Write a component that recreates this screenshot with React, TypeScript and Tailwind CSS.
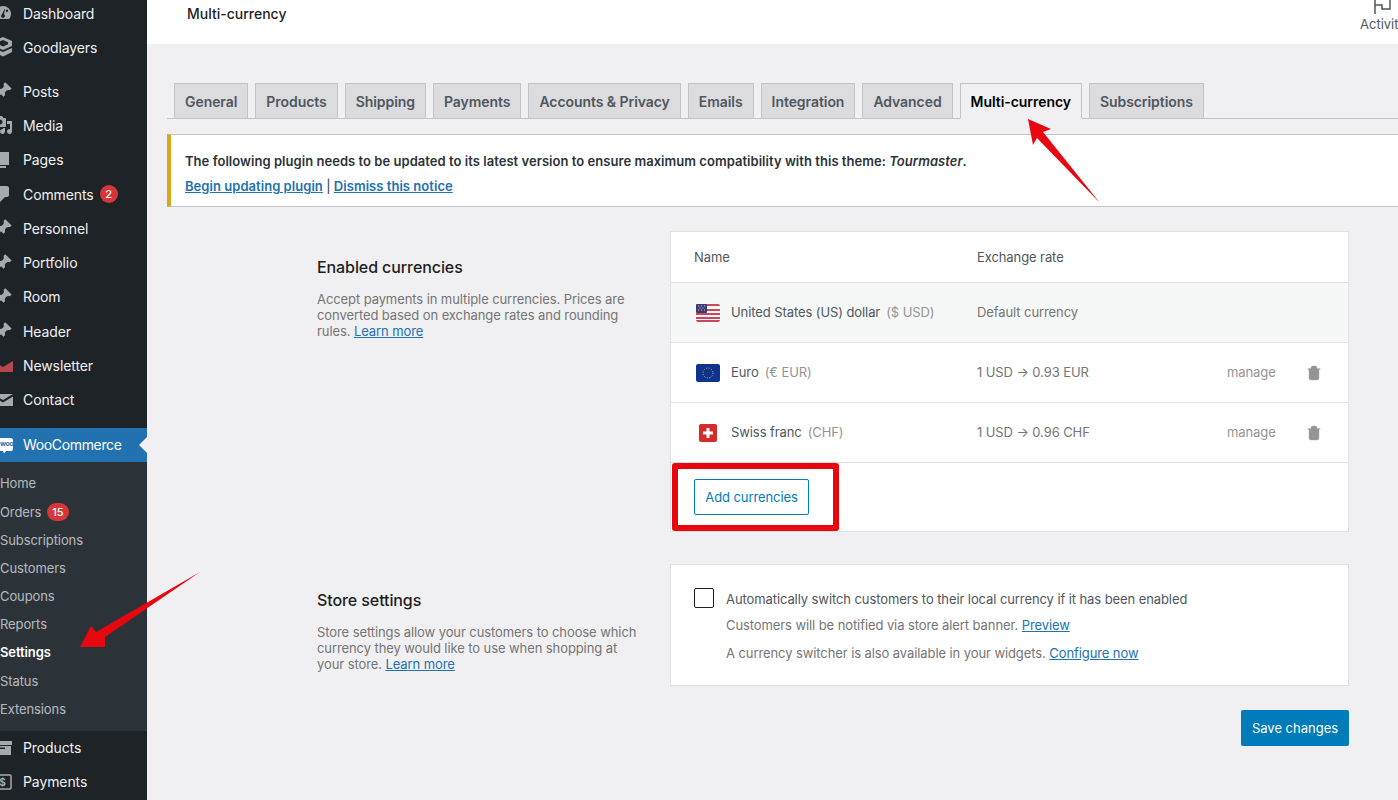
import React from 'react';
import { Trash2 } from 'lucide-react';

const PIN = 'M10.44 3.02l1.82-1.82 6.36 6.35-1.83 1.82c-1.05-.68-2.48-.57-3.41.36l-.75.75c-.92.93-1.04 2.35-.35 3.41l-1.83 1.82-2.41-2.41-2.8 2.79c-.42.42-3.38 2.71-3.8 2.29s1.86-3.39 2.28-3.81l2.79-2.79L4.1 9.36l1.83-1.82c1.05.69 2.48.57 3.41-.36l.75-.75c.93-.92 1.04-2.35.35-3.41z';
const MEDIA = 'M13 11V4c0-.55-.45-1-1-1h-1.67L9 1H5L3.67 3H2c-.55 0-1 .45-1 1v7c0 .55.45 1 1 1h10c.55 0 1-.45 1-1zM7 4.5c1.38 0 2.5 1.12 2.5 2.5S8.38 9.5 7 9.5 4.5 8.38 4.5 7 5.62 4.5 7 4.5zM14 6h5v10.5c0 1.38-1.12 2.5-2.5 2.5S14 17.88 14 16.5s1.12-2.5 2.5-2.5c.17 0 .34.02.5.05V9h-3V6zm-4 8.05V13h2v3.5c0 1.38-1.12 2.5-2.5 2.5S7 17.88 7 16.5 8.12 14 9.5 14c.17 0 .34.02.5.05z';
const PAGES = 'M6 15V2h10v13H6zm-1 1h8v2H3V5h2v11z';
const COMMENTS = 'M5 2h9c1.1 0 2 .9 2 2v7c0 1.1-.9 2-2 2h-2l-5 5v-5H5c-1.1 0-2-.9-2-2V4c0-1.1.9-2 2-2z';
const GAUGE = 'M10 3a8 8 0 0 0-8 8c0 2 .7 3.700 1.900 5h12.200A8 8 0 0 0 18 11a8 8 0 0 0-8-8zM6 6.500a1.200 1.200 0 1 1 0 2.400 1.200 1.200 0 0 1 0-2.400zm8 0a1.200 1.200 0 1 1 0 2.400 1.200 1.200 0 0 1 0-2.400zM10 15a2 2 0 0 1-1-3.700L11.500 6l.5.2-1 5.100A2 2 0 0 1 10 15z';
const STACK = 'M10 0l9 4v5l-9 4-9-4V4l9-4zm0 3L5 5.200v2L10 9.500l5-2.300v-2L10 3zM1 11l9 4 9-4v4l-9 4.500L1 15v-4z';
const MAIL_OPEN = 'M0 5l10 6 10-6v11H0V5z';
const MAIL = 'M0 4h20L10 10 0 4zm0 2.500l10 6 10-6V16H0V6.500z';
const BOX = 'M0 3h19v4H0V3zm1 5h17v9H1V8zm5 1.500V11h6V9.500H6z';

const topItems = [
  { label: 'Dashboard', d: GAUGE, cls: 'h-[34px]' },
  { label: 'Goodlayers', d: STACK, cls: 'h-[34px] mb-[10px]' },
  { label: 'Posts', d: PIN, cls: 'h-[34.300px]' },
  { label: 'Media', d: MEDIA, cls: 'h-[34.300px]' },
  { label: 'Pages', d: PAGES, cls: 'h-[34.300px]' },
  { label: 'Comments', d: COMMENTS, cls: 'h-[34.300px]', badge: '2' },
  { label: 'Personnel', d: PIN, cls: 'h-[34.300px]' },
  { label: 'Portfolio', d: PIN, cls: 'h-[34.300px]' },
  { label: 'Room', d: PIN, cls: 'h-[34.300px]' },
  { label: 'Header', d: PIN, cls: 'h-[34.300px]' },
  { label: 'Newsletter', d: MAIL_OPEN, cls: 'h-[34.300px]', red: true },
  { label: 'Contact', d: MAIL, cls: 'h-[34.300px]' },
];

const subItems = [
  { label: 'Home' },
  { label: 'Orders', badge: '15' },
  { label: 'Subscriptions' },
  { label: 'Customers' },
  { label: 'Coupons' },
  { label: 'Reports' },
  { label: 'Settings', active: true },
  { label: 'Status' },
  { label: 'Extensions' },
];

const tabs = ['General', 'Products', 'Shipping', 'Payments', 'Accounts & Privacy', 'Emails', 'Integration', 'Advanced', 'Multi-currency', 'Subscriptions'];

const MenuIcon: React.FC<{ d: string; red?: boolean }> = ({ d, red }) => (
  <svg viewBox="0 0 20 20" className={`w-5 h-5 -ml-[7px] mr-[10px] shrink-0 ${red ? 'fill-[#b5474f]' : 'fill-[#a7aaad]'}`}>
    <path d={d} />
  </svg>
);

const Badge: React.FC<{ n: string }> = ({ n }) => (
  <span className="ml-[6px] h-[18px] min-w-[18px] px-[5px] rounded-full bg-[#d63638] text-white text-[11px] font-medium flex items-center justify-center">{n}</span>
);

const Sidebar: React.FC = () => (
  <div className="w-[147px] shrink-0 bg-[#1d2327] text-[#f0f0f1] text-[14px] tracking-[-0.1px] overflow-hidden">
    <div className="-mt-[4px]">
      {topItems.map(it => (
        <div key={it.label} className={`flex items-center ${it.cls}`}>
          <MenuIcon d={it.d} red={it.red} />
          <span>{it.label}</span>
          {it.badge && <Badge n={it.badge} />}
        </div>
      ))}
    </div>
    <div className="mt-[11px] h-[34px] bg-[#2271b1] text-white flex items-center relative tracking-[-0.35px]">
      <svg viewBox="0 0 20 20" className="w-5 h-5 -ml-[7px] mr-[10px] shrink-0 fill-white">
        <path d="M2 3h16c1 0 2 1 2 2v9c0 1-1 2-2 2h-5l-2 2.500L10 16H2c-1 0-2-1-2-2V5c0-1 1-2 2-2z" />
      </svg>
      <span className="absolute left-[0px] top-[11px] text-[7px] font-bold text-[#2271b1] leading-[10px]">woo</span>
      <span>WooCommerce</span>
      <span className="absolute right-0 top-[9px] w-0 h-0 border-y-[8px] border-y-transparent border-r-[8px] border-r-[#f0f0f2]" />
    </div>
    <div className="h-[269px] bg-[#2c3338] pt-[8px] text-[13px] text-[#f0f6fc]/70">
      {subItems.map(it => (
        <div key={it.label} className={`flex items-center h-[28.200px] ${it.active ? 'text-white font-semibold' : ''}`}>
          <span>{it.label}</span>
          {it.badge && <Badge n={it.badge} />}
        </div>
      ))}
    </div>
    <div>
      <div className="flex items-center h-[34px]">
        <MenuIcon d={BOX} />
        <span>Products</span>
      </div>
      <div className="flex items-center h-[34px]">
        <svg viewBox="0 0 20 20" className="w-5 h-5 -ml-[7px] mr-[10px] shrink-0">
          <rect x="1" y="3" width="17" height="14" rx="1" fill="none" stroke="#a7aaad" strokeWidth="1.500" />
          <text x="9.500" y="14" textAnchor="middle" fontSize="10" fontWeight="700" fill="#a7aaad">$</text>
        </svg>
        <span>Payments</span>
      </div>
    </div>
  </div>
);

const UsFlag = () => (
  <svg viewBox="0 0 24 18" className="w-6 h-[18px]">
    <rect width="24" height="18" rx="2" fill="#f4f4f4" />
    <path d="M0 2a2 2 0 0 1 2-2h20a2 2 0 0 1 2 2H0zM0 5h24v2H0zM0 9h24v2H0zM0 13h24v2H0zM0 16h24a2 2 0 0 1-2 2H2a2 2 0 0 1-2-2z" fill="#c9485b" />
    <rect width="11" height="9" rx="1" fill="#3c3b6e" />
    <path d="M2 2h1M5 2h1M8 2h1M3.500 4h1M6.500 4h1M2 6h1M5 6h1M8 6h1" stroke="#c8c8e0" strokeWidth="1" />
  </svg>
);

const EuFlag = () => (
  <svg viewBox="0 0 24 18" className="w-6 h-[18px]">
    <rect width="24" height="18" rx="2" fill="#10338f" />
    <circle cx="12" cy="9" r="5" fill="none" stroke="#d8c94a" strokeWidth="1" strokeDasharray="1 1.620" />
  </svg>
);

const ChFlag = () => (
  <svg viewBox="0 0 18 18" className="w-[18px] h-[18px] mx-[3px]">
    <rect width="18" height="18" rx="2" fill="#d52b2b" />
    <path d="M7.500 4h3v3.500H14v3h-3.500V14h-3v-3.500H4v-3h3.500z" fill="#fff" />
  </svg>
);

const CurrencyRow: React.FC<{ flag: React.ReactNode; name: string; code: string; rate: string }> = ({ flag, name, code, rate }) => (
  <div className="h-[60px] flex items-center border-b border-[#e0e0e0]">
    <div className="w-[306px] pl-[25px] flex items-center shrink-0">
      <div className="w-6 mr-[11px] flex">{flag}</div>
      <span className="text-[#50575e]">{name}</span>
      <span className="ml-[6px] text-[#949494]">{code}</span>
    </div>
    <div className="w-[250px] text-[#757575] shrink-0">{rate}</div>
    <div className="w-[79px] text-[#949494] shrink-0">manage</div>
    <Trash2 className="w-[16px] h-[16px] text-[#949494] fill-[#949494]" strokeWidth={1.500} />
  </div>
);

export default function App() {
  return (
    <div className="relative flex h-[800px] w-[1398px] overflow-hidden bg-[#f0f0f2] font-['Inter',sans-serif]">
      <Sidebar />
      <div className="flex-1 min-w-0">
        {/* Header */}
        <div className="h-11 bg-white relative flex pl-10 pt-[5px] overflow-hidden">
          <h1 className="text-[14px] font-medium text-[#1e1e1e] leading-[18px]">Multi-currency</h1>
          <div className="absolute left-[1213px] top-[-9px] flex flex-col items-start text-[13px] text-[#50575e] whitespace-nowrap">
            <svg viewBox="0 0 20 24" className="w-[20px] h-[24px] ml-[11px] fill-none stroke-[#50575e]" strokeWidth={1.500}>
              <path d="M4 23V3H19V18H11V14H4" />
            </svg>
            <span className="mt-[1px] leading-[16px]">Activity</span>
          </div>
        </div>

        <div className="pl-5">
          {/* Tabs */}
          <div className="mt-[39px] h-[36px] flex pl-[7px] gap-[7px] border-b border-[#c3c4c7]">
            {tabs.map(t => (
              <div
                key={t}
                className={`h-[36px] px-[10px] flex items-center text-[14px] font-semibold tracking-[-0.06px] border border-[#c3c4c7] whitespace-nowrap ${
                  t === 'Multi-currency' ? 'bg-[#f0f0f2] text-black border-b-[#f0f0f2]' : 'bg-[#dcdcde] text-[#50575e]'
                }`}
              >
                {t}
              </div>
            ))}
          </div>

          {/* Notice */}
          <div className="mt-[15px] -mr-[2px] h-[73px] bg-white border border-[#c3c4c7] border-l-[4px] border-l-[#dba617] pl-[14px] text-[13px] tracking-[0.04px]">
            <p className="mt-[17px] font-semibold text-[#2c3338] leading-[18px]">
              The following plugin needs to be updated to its latest version to ensure maximum compatibility with this theme: <em>Tourmaster</em>.
            </p>
            <p className="mt-[7px] font-semibold leading-[18px] text-[#2c3338]">
              <a className="text-[#2271b1] underline">Begin updating plugin</a> <span className="font-normal">|</span> <a className="text-[#2271b1] underline">Dismiss this notice</a>
            </p>
          </div>

          {/* Enabled currencies */}
          <div className="mt-[24px] grid grid-cols-[353px_679px] pl-[150px] gap-y-[32px] text-[13px] tracking-[-0.09px]">
            <div className="pt-[26px] pr-[28px]">
              <h2 className="text-[16px] font-medium text-[#1e1e1e] leading-[20px]">Enabled currencies</h2>
              <p className="mt-[14px] text-[#757575] leading-[16px]">
                Accept payments in multiple currencies. Prices are converted based on exchange rates and rounding rules. <a className="text-[#2271b1] underline">Learn more</a>
              </p>
            </div>
            <div className="h-[301px] bg-white border border-[#e0e0e0]">
              <div className="h-[51px] pt-[1px] flex items-center border-b border-[#e0e0e0] text-[#50575e]">
                <div className="w-[306px] pl-[23px]">Name</div>
                <div>Exchange rate</div>
              </div>
              <div className="h-[60px] flex items-center border-b border-[#e0e0e0] bg-[#f6f7f7]">
                <div className="w-[306px] pl-[25px] flex items-center shrink-0">
                  <div className="w-6 mr-[11px] flex"><UsFlag /></div>
                  <span className="text-[#50575e]">United States (US) dollar</span>
                  <span className="ml-[6px] text-[#949494]">($ USD)</span>
                </div>
                <div className="text-[#757575]">Default currency</div>
              </div>
              <CurrencyRow flag={<EuFlag />} name="Euro" code="(€ EUR)" rate="1 USD → 0.93 EUR" />
              <CurrencyRow flag={<ChFlag />} name="Swiss franc" code="(CHF)" rate="1 USD → 0.96 CHF" />
              <div className="pt-[16px] pl-[23px]">
                <button className="h-[36px] w-[115px] pt-[1px] border border-[#007cba] rounded-[2px] text-[#007cba] bg-white">Add currencies</button>
              </div>
            </div>

            {/* Store settings */}
            <div className="pt-[26px] pr-[28px]">
              <h2 className="text-[16px] font-medium text-[#1e1e1e] leading-[20px]">Store settings</h2>
              <p className="mt-[14px] text-[#757575] leading-[16px]">
                Store settings allow your customers to choose which currency they would like to use when shopping at your store. <a className="text-[#2271b1] underline">Learn more</a>
              </p>
            </div>
            <div className="h-[122px] bg-white border border-[#e0e0e0] pl-[23px] pt-[23px] flex items-start">
              <span className="w-5 h-5 border border-[#1e1e1e] rounded-[2px] shrink-0" />
              <div className="ml-[12px] pt-[1px]">
                <p className="leading-[20px] text-[#50575e]">Automatically switch customers to their local currency if it has been enabled</p>
                <p className="mt-[7px] leading-[18px] text-[#757575]">Customers will be notified via store alert banner. <a className="text-[#2271b1] underline">Preview</a></p>
                <p className="mt-[10px] leading-[18px] text-[#757575]">A currency switcher is also available in your widgets. <a className="text-[#2271b1] underline">Configure now</a></p>
              </div>
            </div>
          </div>

          <div className="mt-[24px] w-[1182px] flex justify-end">
            <button className="h-[36px] w-[108px] pt-[1px] rounded-[2px] bg-[#007cba] text-white text-[13px]">Save changes</button>
          </div>
        </div>
      </div>

      {/* Annotations */}
      <div className="absolute left-[672px] top-[463px] w-[167px] h-[68px] border-[6px] border-[#e8060f] rounded-[3px]" />
      <svg viewBox="0 0 1398 800" className="absolute left-0 top-0 w-[1398px] h-[800px] pointer-events-none">
        <polygon points="200,572 105,637 105,647 80,647 91,626 96,632" fill="#e8060f" />
        <polygon points="1028,119 1051,129 1043,132 1100,203 1037,138 1033,145" fill="#e8060f" />
      </svg>
    </div>
  );
}
